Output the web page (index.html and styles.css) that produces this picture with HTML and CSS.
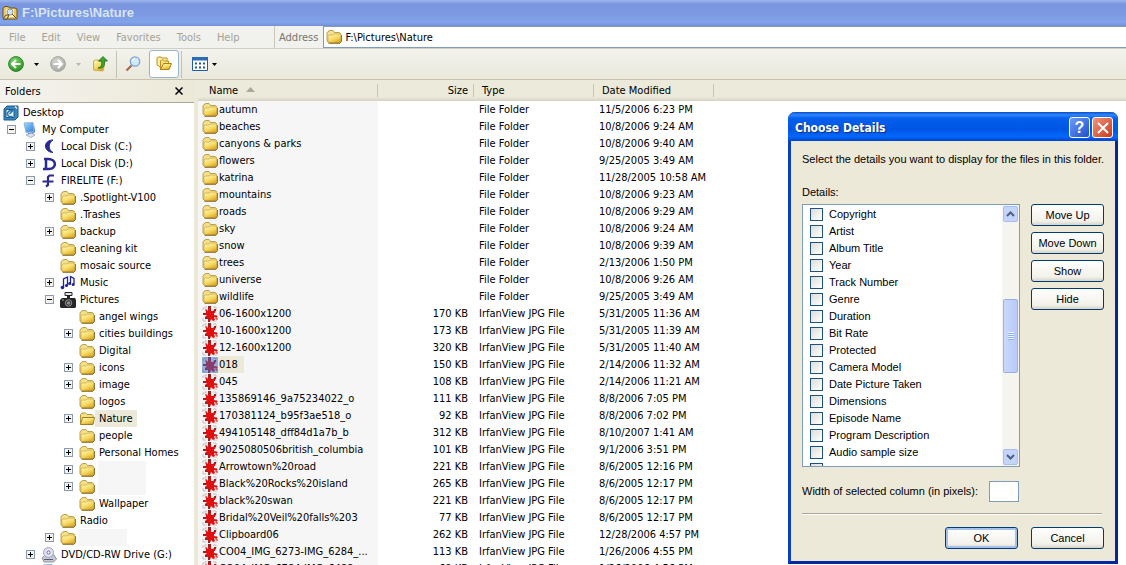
FILE: index.html
```html
<!DOCTYPE html>
<html lang="en">
<head>
<meta charset="UTF-8" />
<meta name="viewport" content="width=device-width, initial-scale=1" />
<title>F:\Pictures\Nature</title>
<link rel="stylesheet" href="styles.css">
</head>
<body>

<svg class="sprite" aria-hidden="true">
  <defs>
    <linearGradient id="gold" x1="0" y1="0" x2="0.6" y2="1">
      <stop offset="0" stop-color="#fffbc4" /><stop offset="0.6" stop-color="#f6d962" /><stop offset="1" stop-color="#dba92c" />
    </linearGradient>
    <radialGradient id="green" cx="0.4" cy="0.3" r="0.8">
      <stop offset="0" stop-color="#7fd66b" /><stop offset="1" stop-color="#1f8a1c" />
    </radialGradient>
    <radialGradient id="grey" cx="0.4" cy="0.3" r="0.8">
      <stop offset="0" stop-color="#d4d4d0" /><stop offset="1" stop-color="#a4a4a0" />
    </radialGradient>
    <linearGradient id="screen" x1="0" y1="0" x2="1" y2="1">
      <stop offset="0" stop-color="#a8dcfb" /><stop offset="1" stop-color="#2a78d8" />
    </linearGradient>
  </defs>
  <symbol id="folder" viewBox="0 0 16 16">
    <path d="M1 12V4l1-1.500L4 1.500h3l1.500 2H13l1.500 1V13l-1 1H3z" fill="#f5e08a" stroke="#b5963f" stroke-width=".9" />
    <path d="M2 12.500V7l1-1h4l1-1h6.500l.5 1v7l-1 1H3z" fill="url(#gold)" stroke="#c9a540" stroke-width=".7" />
    <path d="M2.500 14.200h11.500l1.400-1.600V6" fill="none" stroke="#7d6020" stroke-width=".9" />
  </symbol>
  <symbol id="folder-open" viewBox="0 0 16 16">
    <path d="M1.500 13V3.500L3 2h3.500L8 3.500h5l1 1V8" fill="#f5e08a" stroke="#b5963f" />
    <path d="M1.500 13.500l2-7h12l-1.500 7z" fill="url(#gold)" stroke="#a07c22" />
  </symbol>
  <symbol id="splat" viewBox="0 0 16 16">
    <path d="M0 0h16v16H0z" fill="#fbf0f0" />
    <path d="M1 4V2h3V0M11 1h3v3h1M1 12v3h3M11 15h4" fill="none" stroke="#c4c2c2" />
    <path d="M6 2h3v3h2l2-2 1 1-1 3h-1v2l3 1v1h-3l1 3-2 1-2-2-1 3H6v-3H3v-2l2-2H1V7h3V5L3 4l1-1 2 2z" fill="#e01010" />
    <path d="M6 0h3v3H6zM1 7h3v2H1zM3 11h2v2H3zM6 13h2v3H6zM12 3h2v2h-2z" fill="#962424" />
    <path d="M13 10h2v1h-1v2h2" fill="none" stroke="#e01010" />
  </symbol>
  <symbol id="caret" viewBox="0 0 5 3"><path d="M0 0h5L2.500 3z" fill="currentColor" /></symbol>
  <symbol id="desktop" viewBox="0 0 16 16">
    <path d="M1 4l3-3h11v11l-3 3H1z" fill="#3b87be" stroke="#1b5b8d" />
    <path d="M3 4.500h8v8H3z" fill="#eaf6fd" stroke="#1b5b8d" />
    <path d="M9.500 6.500A3 3 0 1 0 9.500 11M6.500 9l6-6" fill="none" stroke="#2a77ae" stroke-width="1.500" />
    <path d="M12 1.500l2 2" stroke="#d9f0ff" stroke-width="1.500" />
  </symbol>
  <symbol id="computer" viewBox="0 0 16 16">
    <path d="M2 1l9-.5 1 9-8 1z" fill="url(#screen)" stroke="#7aa9dc" stroke-width=".8" />
    <path d="M12 2l1 8-4 3H6v-2l6-1z" fill="#4c78b8" />
    <path d="M4 13l5-2 4 2-4 2.500z" fill="#dbe3ee" stroke="#8b9ab2" stroke-width=".7" />
  </symbol>
  <symbol id="disk-c" viewBox="0 0 16 16">
    <path d="M12 1C2 1 2 13 12 13.500 7 11 7 4 12 1z" fill="#2a2a96" stroke="#2a2a96" />
  </symbol>
  <symbol id="disk-d" viewBox="0 0 16 16">
    <path d="M3 3h4c9 0 9 10 1 10H2M5 3v9" fill="none" stroke="#2a2a96" stroke-width="2.500" />
  </symbol>
  <symbol id="disk-f" viewBox="0 0 16 16">
    <path d="M13 2.500H8.500L7 4v8l-2 1.500M1.500 8.500h11" fill="none" stroke="#2a2a96" stroke-width="2.200" />
  </symbol>
  <symbol id="music" viewBox="0 0 16 16">
    <path d="M3.500 12V4l4-2v8M10.500 8V1.500L14 3.500V9" fill="none" stroke="#20209a" stroke-width="1.300" />
    <g fill="#20209a"><circle cx="2.500" cy="12.500" r="1.800" /><circle cx="6.500" cy="10.500" r="1.600" /><circle cx="9.700" cy="8.500" r="1.500" /><circle cx="13.200" cy="9.500" r="1.500" /></g>
  </symbol>
  <symbol id="camera" viewBox="0 0 16 16">
    <path d="M5 .5h7v3H5z" fill="#e4e4e4" stroke="#222" />
    <path d="M7 4h3v2h5l1 2v7l-1 1H1l-1-1V8l2-2h5z" fill="#262626" />
    <circle cx="8.500" cy="11" r="3.300" fill="#444" stroke="#888" /><circle cx="8.500" cy="11" r="1.500" fill="#999" />
    <path d="M2 8h2" stroke="#aaa" />
  </symbol>
  <symbol id="dvd" viewBox="0 0 16 16">
    <path d="M1 11l3-3h9l2.500 4-3 3H3z" fill="#c6c9d2" stroke="#7e828e" stroke-width=".8" />
    <circle cx="7.500" cy="5.500" r="5" fill="#e2dff4" stroke="#a3a0c4" /><circle cx="7.500" cy="5.500" r="1.500" fill="#fff" stroke="#6d69a5" />
    <path d="M3 12.500h9" stroke="#555b6b" />
  </symbol>
</svg>

<div class="window">
  <header class="titlebar">
    <svg class="icon" viewBox="0 0 16 16">
      <path d="M1 13V3l2-1.500h3L8 3h5l2 1v10H2z" fill="#efc95e" stroke="#6b5320" />
      <path d="M4 4h8v8H4z" fill="#fff4cf" /><circle cx="8" cy="7" r="3" fill="#cfe6f8" stroke="#8b95a0" />
      <path d="M1 14l3-4h3l-2 4zM10 9l4 4" fill="#f8da7c" stroke="#5e4a1b" />
    </svg>
    <h1>F:\Pictures\Nature</h1>
  </header>

  <div class="menubar">
    <nav class="menu" aria-label="Menu">
      <button>File</button>
      <button>Edit</button>
      <button>View</button>
      <button>Favorites</button>
      <button>Tools</button>
      <button>Help</button>
    </nav>
    <div class="address">
      <label for="address">Address</label>
      <div class="address-box">
        <svg class="icon"><use href="#folder" /></svg>
        <input type="text" id="address" value="F:\Pictures\Nature" />
      </div>
    </div>
  </div>

  <div class="toolbar" role="toolbar" aria-label="Standard buttons">
    <button class="tool" aria-label="Back">
      <svg class="icon" viewBox="0 0 16 16"><circle cx="8" cy="8" r="7.400" fill="url(#green)" stroke="#2c8529" /><path d="M12.500 8H5M8 4L4 8l4 4" fill="none" stroke="#fff" stroke-width="2" /></svg>
    </button>
    <button class="drop" aria-label="Back history"><svg class="caret"><use href="#caret" /></svg></button>
    <button class="tool" aria-label="Forward" disabled>
      <svg class="icon" viewBox="0 0 16 16"><circle cx="8" cy="8" r="7.400" fill="url(#grey)" stroke="#a5a5a0" /><path d="M3.500 8H11M8 4l4 4-4 4" fill="none" stroke="#fff" stroke-width="2" /></svg>
    </button>
    <button class="drop" aria-label="Forward history" disabled><svg class="caret"><use href="#caret" /></svg></button>
    <button class="tool" aria-label="Up">
      <svg class="icon" viewBox="0 0 16 16">
        <path d="M1.500 14V5l2-1H6l1 1.500h5.500l-1 8.500-1 1z" fill="url(#gold)" stroke="#d0a83c" />
        <path d="M6 12c4-1 4-4 3.500-7H6.500L11 .5 15.500 5h-3c.5 5-1 8-6.500 7z" fill="#3aa52f" stroke="#1f6d1a" stroke-width=".8" />
      </svg>
    </button>
    <span class="sep"></span>
    <button class="tool" aria-label="Search">
      <svg class="icon" viewBox="0 0 16 16"><path d="M6.500 9.500L1.500 14.500" stroke="#a06a48" stroke-width="2.200" /><circle cx="10" cy="5.500" r="4.700" fill="#cfeafc" stroke="#7fa3d6" stroke-width="1.300" /><path d="M7.500 5A3 3 0 0 1 10 2.500" fill="none" stroke="#fff" stroke-width="1.300" /></svg>
    </button>
    <button class="tool pressed" aria-label="Folders" aria-pressed="true">
      <svg class="icon" viewBox="0 0 16 16">
        <path d="M1 9V2l1-1h3l1 1h5v3L4 11z" fill="#fdf0a8" stroke="#c08f1c" />
        <path d="M4.500 13.500V5l1-1h2l1 1h4v3" fill="#fbe383" stroke="#c08f1c" />
        <path d="M4.500 13.500l3-6h8l-2.500 6z" fill="url(#gold)" stroke="#b07f14" />
      </svg>
    </button>
    <span class="sep"></span>
    <button class="tool views" aria-label="Views">
      <svg class="icon" viewBox="0 0 16 16"><path d="M.5 1.500h15v13H.5z" fill="#fff" stroke="#1f5ea8" /><path d="M0 1h16v3.500H0z" fill="#2a6cb8" /><path d="M3 7.500h10M3 11.500h10" stroke="#26568e" stroke-width="2" stroke-dasharray="2" /></svg>
      <svg class="caret"><use href="#caret" /></svg>
    </button>
  </div>

  <div class="content">
    <aside class="folders">
      <div class="folders-head">
        <h2>Folders</h2>
        <button class="close" aria-label="Close folders"><svg viewBox="0 0 8 8"><path d="M.5.5l7 7M7.500.5l-7 7" stroke="#000" stroke-width="1.500" /></svg></button>
      </div>
      <ul class="tree">
        <li><div class="node"><svg class="icon"><use href="#desktop" /></svg><span>Desktop</span></div>
          <ul>
            <li><div class="node"><button class="toggle open" aria-label="Collapse"></button><svg class="icon"><use href="#computer" /></svg><span>My Computer</span></div>
              <ul>
                <li><div class="node"><button class="toggle" aria-label="Expand"></button><svg class="icon"><use href="#disk-c" /></svg><span>Local Disk (C:)</span></div></li>
                <li><div class="node"><button class="toggle" aria-label="Expand"></button><svg class="icon"><use href="#disk-d" /></svg><span>Local Disk (D:)</span></div></li>
                <li><div class="node"><button class="toggle open" aria-label="Collapse"></button><svg class="icon"><use href="#disk-f" /></svg><span>FIRELITE (F:)</span></div>
                  <ul>
                    <li><div class="node"><button class="toggle" aria-label="Expand"></button><svg class="icon"><use href="#folder" /></svg><span>.Spotlight-V100</span></div></li>
                    <li><div class="node leaf"><svg class="icon"><use href="#folder" /></svg><span>.Trashes</span></div></li>
                    <li><div class="node"><button class="toggle" aria-label="Expand"></button><svg class="icon"><use href="#folder" /></svg><span>backup</span></div></li>
                    <li><div class="node leaf"><svg class="icon"><use href="#folder" /></svg><span>cleaning kit</span></div></li>
                    <li><div class="node leaf"><svg class="icon"><use href="#folder" /></svg><span>mosaic source</span></div></li>
                    <li><div class="node"><button class="toggle" aria-label="Expand"></button><svg class="icon"><use href="#music" /></svg><span>Music</span></div></li>
                    <li><div class="node"><button class="toggle open" aria-label="Collapse"></button><svg class="icon"><use href="#camera" /></svg><span>Pictures</span></div>
                      <ul>
                        <li><div class="node leaf"><svg class="icon"><use href="#folder" /></svg><span>angel wings</span></div></li>
                        <li><div class="node"><button class="toggle" aria-label="Expand"></button><svg class="icon"><use href="#folder" /></svg><span>cities buildings</span></div></li>
                        <li><div class="node leaf"><svg class="icon"><use href="#folder" /></svg><span>Digital</span></div></li>
                        <li><div class="node"><button class="toggle" aria-label="Expand"></button><svg class="icon"><use href="#folder" /></svg><span>icons</span></div></li>
                        <li><div class="node"><button class="toggle" aria-label="Expand"></button><svg class="icon"><use href="#folder" /></svg><span>image</span></div></li>
                        <li><div class="node leaf"><svg class="icon"><use href="#folder" /></svg><span>logos</span></div></li>
                        <li><div class="node"><button class="toggle" aria-label="Expand"></button><svg class="icon"><use href="#folder-open" /></svg><span class="selected">Nature</span></div></li>
                        <li><div class="node leaf"><svg class="icon"><use href="#folder" /></svg><span>people</span></div></li>
                        <li><div class="node"><button class="toggle" aria-label="Expand"></button><svg class="icon"><use href="#folder" /></svg><span>Personal Homes</span></div></li>
                        <li><div class="node"><button class="toggle" aria-label="Expand"></button><svg class="icon"><use href="#folder" /></svg><span class="blank"></span></div></li>
                        <li><div class="node"><button class="toggle" aria-label="Expand"></button><svg class="icon"><use href="#folder" /></svg><span class="blank"></span></div></li>
                        <li><div class="node leaf"><svg class="icon"><use href="#folder" /></svg><span>Wallpaper</span></div></li>
                      </ul>
                    </li>
                    <li><div class="node leaf"><svg class="icon"><use href="#folder" /></svg><span>Radio</span></div></li>
                    <li><div class="node"><button class="toggle" aria-label="Expand"></button><svg class="icon"><use href="#folder" /></svg><span class="blank"></span></div></li>
                  </ul>
                </li>
                <li><div class="node"><button class="toggle" aria-label="Expand"></button><svg class="icon"><use href="#dvd" /></svg><span>DVD/CD-RW Drive (G:)</span></div></li>
                <li><div class="node leaf"><svg class="icon"><use href="#computer" /></svg></div></li>
              </ul>
            </li>
          </ul>
        </li>
      </ul>
    </aside>

    <main class="files">
      <table>
        <colgroup><col class="col-name"><col class="col-size"><col class="col-type"><col class="col-date"><col></colgroup>
        <thead>
          <tr>
            <th>Name <svg class="sort" viewBox="0 0 9 5"><path d="M0 5h9L4.500 0z" fill="#aca899" /></svg></th>
            <th class="size">Size</th><th>Type</th><th>Date Modified</th><th></th>
          </tr>
        </thead>
        <tbody>
          <tr><td><div class="file"><svg class="icon"><use href="#folder" /></svg><span>autumn</span></div></td><td></td><td>File Folder</td><td>11/5/2006 6:23 PM</td><td></td></tr>
          <tr><td><div class="file"><svg class="icon"><use href="#folder" /></svg><span>beaches</span></div></td><td></td><td>File Folder</td><td>10/8/2006 9:24 AM</td><td></td></tr>
          <tr><td><div class="file"><svg class="icon"><use href="#folder" /></svg><span>canyons &amp; parks</span></div></td><td></td><td>File Folder</td><td>10/8/2006 9:40 AM</td><td></td></tr>
          <tr><td><div class="file"><svg class="icon"><use href="#folder" /></svg><span>flowers</span></div></td><td></td><td>File Folder</td><td>9/25/2005 3:49 AM</td><td></td></tr>
          <tr><td><div class="file"><svg class="icon"><use href="#folder" /></svg><span>katrina</span></div></td><td></td><td>File Folder</td><td>11/28/2005 10:58 AM</td><td></td></tr>
          <tr><td><div class="file"><svg class="icon"><use href="#folder" /></svg><span>mountains</span></div></td><td></td><td>File Folder</td><td>10/8/2006 9:23 AM</td><td></td></tr>
          <tr><td><div class="file"><svg class="icon"><use href="#folder" /></svg><span>roads</span></div></td><td></td><td>File Folder</td><td>10/8/2006 9:29 AM</td><td></td></tr>
          <tr><td><div class="file"><svg class="icon"><use href="#folder" /></svg><span>sky</span></div></td><td></td><td>File Folder</td><td>10/8/2006 9:24 AM</td><td></td></tr>
          <tr><td><div class="file"><svg class="icon"><use href="#folder" /></svg><span>snow</span></div></td><td></td><td>File Folder</td><td>10/8/2006 9:39 AM</td><td></td></tr>
          <tr><td><div class="file"><svg class="icon"><use href="#folder" /></svg><span>trees</span></div></td><td></td><td>File Folder</td><td>2/13/2006 1:50 PM</td><td></td></tr>
          <tr><td><div class="file"><svg class="icon"><use href="#folder" /></svg><span>universe</span></div></td><td></td><td>File Folder</td><td>10/8/2006 9:26 AM</td><td></td></tr>
          <tr><td><div class="file"><svg class="icon"><use href="#folder" /></svg><span>wildlife</span></div></td><td></td><td>File Folder</td><td>9/25/2005 3:49 AM</td><td></td></tr>
          <tr><td><div class="file"><svg class="icon"><use href="#splat" /></svg><span>06-1600x1200</span></div></td><td class="size">170 KB</td><td>IrfanView JPG File</td><td>5/31/2005 11:36 AM</td><td></td></tr>
          <tr><td><div class="file"><svg class="icon"><use href="#splat" /></svg><span>10-1600x1200</span></div></td><td class="size">173 KB</td><td>IrfanView JPG File</td><td>5/31/2005 11:39 AM</td><td></td></tr>
          <tr><td><div class="file"><svg class="icon"><use href="#splat" /></svg><span>12-1600x1200</span></div></td><td class="size">320 KB</td><td>IrfanView JPG File</td><td>5/31/2005 11:40 AM</td><td></td></tr>
          <tr><td><div class="file current"><svg class="icon"><use href="#splat" /></svg><span>018</span></div></td><td class="size">150 KB</td><td>IrfanView JPG File</td><td>2/14/2006 11:32 AM</td><td></td></tr>
          <tr><td><div class="file"><svg class="icon"><use href="#splat" /></svg><span>045</span></div></td><td class="size">108 KB</td><td>IrfanView JPG File</td><td>2/14/2006 11:21 AM</td><td></td></tr>
          <tr><td><div class="file"><svg class="icon"><use href="#splat" /></svg><span>135869146_9a75234022_o</span></div></td><td class="size">111 KB</td><td>IrfanView JPG File</td><td>8/8/2006 7:05 PM</td><td></td></tr>
          <tr><td><div class="file"><svg class="icon"><use href="#splat" /></svg><span>170381124_b95f3ae518_o</span></div></td><td class="size">92 KB</td><td>IrfanView JPG File</td><td>8/8/2006 7:02 PM</td><td></td></tr>
          <tr><td><div class="file"><svg class="icon"><use href="#splat" /></svg><span>494105148_dff84d1a7b_b</span></div></td><td class="size">312 KB</td><td>IrfanView JPG File</td><td>8/10/2007 1:41 AM</td><td></td></tr>
          <tr><td><div class="file"><svg class="icon"><use href="#splat" /></svg><span>9025080506british_columbia</span></div></td><td class="size">101 KB</td><td>IrfanView JPG File</td><td>9/1/2006 3:51 PM</td><td></td></tr>
          <tr><td><div class="file"><svg class="icon"><use href="#splat" /></svg><span>Arrowtown%20road</span></div></td><td class="size">221 KB</td><td>IrfanView JPG File</td><td>8/6/2005 12:16 PM</td><td></td></tr>
          <tr><td><div class="file"><svg class="icon"><use href="#splat" /></svg><span>Black%20Rocks%20island</span></div></td><td class="size">265 KB</td><td>IrfanView JPG File</td><td>8/6/2005 12:17 PM</td><td></td></tr>
          <tr><td><div class="file"><svg class="icon"><use href="#splat" /></svg><span>black%20swan</span></div></td><td class="size">221 KB</td><td>IrfanView JPG File</td><td>8/6/2005 12:17 PM</td><td></td></tr>
          <tr><td><div class="file"><svg class="icon"><use href="#splat" /></svg><span>Bridal%20Veil%20falls%203</span></div></td><td class="size">77 KB</td><td>IrfanView JPG File</td><td>8/6/2005 12:17 PM</td><td></td></tr>
          <tr><td><div class="file"><svg class="icon"><use href="#splat" /></svg><span>Clipboard06</span></div></td><td class="size">262 KB</td><td>IrfanView JPG File</td><td>12/28/2006 4:57 PM</td><td></td></tr>
          <tr><td><div class="file"><svg class="icon"><use href="#splat" /></svg><span>CO04_IMG_6273-IMG_6284_...</span></div></td><td class="size">113 KB</td><td>IrfanView JPG File</td><td>1/26/2006 4:55 PM</td><td></td></tr>
          <tr><td><div class="file"><svg class="icon"><use href="#splat" /></svg><span>CO04_IMG_6784-IMG_6488_...</span></div></td><td class="size">69 KB</td><td>IrfanView JPG File</td><td>1/26/2006 4:56 PM</td><td></td></tr>
        </tbody>
      </table>
    </main>
  </div>
</div>

<form class="dialog" role="dialog" aria-labelledby="dialog-title">
  <div class="dialog-title">
    <h2 id="dialog-title">Choose Details</h2>
    <button type="button" class="caption-btn help">?</button>
    <button type="button" class="caption-btn exit" aria-label="Close"><svg viewBox="0 0 12 12"><path d="M1 1l10 10M11 1L1 11" stroke="#fff" stroke-width="2" /></svg></button>
  </div>
  <div class="dialog-body">
    <p>Select the details you want to display for the files in this folder.</p>
    <p class="list-label" id="details-label">Details:</p>
    <div class="picker">
      <div class="listbox" role="group" aria-labelledby="details-label">
        <div class="options">
          <label><input type="checkbox" /> Copyright</label>
          <label><input type="checkbox" /> Artist</label>
          <label><input type="checkbox" /> Album Title</label>
          <label><input type="checkbox" /> Year</label>
          <label><input type="checkbox" /> Track Number</label>
          <label><input type="checkbox" /> Genre</label>
          <label><input type="checkbox" /> Duration</label>
          <label><input type="checkbox" /> Bit Rate</label>
          <label><input type="checkbox" /> Protected</label>
          <label><input type="checkbox" /> Camera Model</label>
          <label><input type="checkbox" /> Date Picture Taken</label>
          <label><input type="checkbox" /> Dimensions</label>
          <label><input type="checkbox" /> Episode Name</label>
          <label><input type="checkbox" /> Program Description</label>
          <label><input type="checkbox" /> Audio sample size</label>
          <label><input type="checkbox" aria-label="More" /></label>
        </div>
        <div class="scrollbar">
          <button type="button" aria-label="Scroll up"><svg viewBox="0 0 9 6"><path d="M1 5l3.500-3.500L8 5" fill="none" stroke="#4d6185" stroke-width="2" /></svg></button>
          <div class="track"><div class="thumb"></div></div>
          <button type="button" aria-label="Scroll down"><svg viewBox="0 0 9 6"><path d="M1 1l3.500 3.500L8 1" fill="none" stroke="#4d6185" stroke-width="2" /></svg></button>
        </div>
      </div>
      <div class="side">
        <button type="button" class="btn">Move Up</button>
        <button type="button" class="btn">Move Down</button>
        <button type="button" class="btn">Show</button>
        <button type="button" class="btn">Hide</button>
      </div>
    </div>
    <div class="width-row">
      <label for="col-width">Width of selected column (in pixels):</label>
      <input type="text" id="col-width" />
    </div>
    <hr />
    <div class="actions">
      <button type="submit" class="btn default">OK</button>
      <button type="button" class="btn">Cancel</button>
    </div>
  </div>
</form>

</body>
</html>
```
FILE: styles.css
```css
* {
  box-sizing: border-box;
}
body {
  margin: 0;
  height: 100vh;
  overflow: hidden;
  position: relative;
  background: #fff;
  color: #000;
  font: 11px/17px "DejaVu Sans Condensed", Tahoma, sans-serif;
}
button, input {
  font: inherit;
  color: inherit;
  margin: 0;
  padding: 0;
  border: 0;
  background: none;
}
h1, h2, p, ul {
  margin: 0;
  padding: 0;
}
/* not display: none, the gradients must stay usable */
.sprite {
  position: absolute;
  width: 0;
  height: 0;
}
.icon {
  width: 16px;
  height: 16px;
  flex: none;
}
.window {
  height: 100%;
  display: flex;
  flex-direction: column;
}

/* title, menu and toolbar */
.titlebar {
  flex: none;
  height: 26px;
  display: flex;
  align-items: center;
  gap: 4px;
  padding-left: 2px;
  background: linear-gradient(#9db8ee, #7a96df 15%, #7b98e1 50%, #82a4ea 85%, #7390d8);
}
.titlebar h1 {
  font: bold 13px/18px "Liberation Sans", Arial, sans-serif;
  color: #d8e4f8;
}
.menubar {
  flex: none;
  height: 23px;
  display: flex;
  background: #f1f1ee;
  border-bottom: 1px solid #d0cfc4;
}
.menu {
  width: 275px;
  display: flex;
  align-items: center;
  gap: 16px;
  padding-left: 9px;
  border-right: 1px solid #c9c7b8;
  color: #a5a294;
}
.address {
  flex: 1;
  display: flex;
  align-items: center;
  gap: 5px;
  padding-left: 4px;
  color: #77756c;
}
.address-box {
  flex: 1;
  height: 22px;
  display: flex;
  align-items: center;
  gap: 3px;
  padding-left: 2px;
  background: #fff;
  border: 1px solid #7f9db9;
  border-right: 0;
}
.address-box input {
  flex: 1;
  color: #000;
}
.toolbar {
  flex: none;
  height: 31px;
  display: flex;
  align-items: center;
  padding-left: 8px;
  background: linear-gradient(#f3f3ee, #e9e8db);
  border-bottom: 1px solid #c5c2b2;
}
.tool {
  display: flex;
  align-items: center;
}
.drop {
  width: 26px;
  display: flex;
  justify-content: center;
  padding-right: 2px;
}
.drop:disabled {
  color: #b9b7aa;
}
.drop:disabled + .tool {
  margin-right: 8px;
}
.caret {
  width: 5px;
  height: 3px;
}
.sep {
  width: 1px;
  height: 27px;
  background: #c5c2b2;
}
.sep + .tool {
  padding: 0 8px;
}
.pressed {
  height: 28px;
  padding: 0 6px;
  margin-right: 2px;
  background: #fff;
  border: 1px solid #98b5cf;
  border-radius: 3px;
}
.sep + .views {
  padding: 0 10px;
  gap: 4px;
}

/* folder tree */
.content {
  flex: 1;
  min-height: 0;
  display: flex;
}
.folders {
  flex: none;
  width: 198px;
  overflow: hidden;
  border-right: 4px solid #ece9d8;
}
.folders-head {
  height: 23px;
  display: flex;
  align-items: center;
  justify-content: space-between;
  padding: 0 10px 0 5px;
  background: linear-gradient(90deg, #f4f3ee, #ece9d8);
  border-bottom: 1px solid #aca899;
}
.folders-head h2 {
  font-size: 11px;
  font-weight: normal;
}
.close {
  width: 9px;
  height: 17px;
}
.close svg {
  display: block;
  width: 8px;
  height: 8px;
}
.tree {
  padding-top: 1px;
}
.tree, .tree ul {
  list-style: none;
}
.tree > li > .node {
  padding-left: 3px;
}
.tree > li > ul {
  padding-left: 7px;
}
.tree > li > ul ul {
  padding-left: 19px;
}
.node {
  height: 17px;
  display: flex;
  align-items: center;
  white-space: nowrap;
}
.node span {
  padding: 0 4px;
}
.leaf {
  padding-left: 15px;
}
.toggle {
  flex: none;
  width: 9px;
  height: 9px;
  margin-right: 6px;
  border: 1px solid #8a9bb0;
  background:
    linear-gradient(#000, #000) center / 5px 1px no-repeat,
    linear-gradient(#000, #000) center / 1px 5px no-repeat,
    #f4f3ee;
}
.toggle.open {
  background: linear-gradient(#000, #000) center / 5px 1px no-repeat, #f4f3ee;
}
.selected {
  background: #ece9d8;
}
.node .blank {
  width: 48px;
  height: 17px;
  margin-left: 3px;
  background: #f6f6f6;
}

/* file list */
.files {
  flex: 1;
  overflow: hidden;
}
table {
  width: 100%;
  table-layout: fixed;
  border-collapse: collapse;
}
.col-name {
  width: 180px;
}
.col-size {
  width: 96px;
}
.col-type, .col-date {
  width: 120px;
}
th {
  height: 21px;
  padding: 0 6px 0 8px;
  font-weight: normal;
  text-align: left;
  background:
    linear-gradient(#c7c5b2, #c7c5b2) right center / 1px 13px no-repeat,
    linear-gradient(#ebeadb 80%, #d6d2c2);
}
th:first-child {
  padding-left: 11px;
}
th:last-child {
  background: linear-gradient(#ebeadb 80%, #d6d2c2);
}
.sort {
  width: 9px;
  height: 5px;
  margin-left: 5px;
  vertical-align: 2px;
}
td {
  height: 17px;
  padding: 0 6px 0 5px;
  white-space: nowrap;
}
td:first-child {
  padding: 0 0 0 4px;
  background: #f6f6f6;
}
.size {
  text-align: right;
}
.file {
  height: 17px;
  display: flex;
  align-items: center;
}
.file span {
  padding-left: 1px;
}
.current .icon {
  background: #316ac5;
}
.current use {
  opacity: 0.5;
}
.current span {
  padding-right: 6px;
  background: #ece9d8;
}

/* dialog */
.dialog {
  position: absolute;
  top: 112px;
  right: 8px;
  width: 330px;
  background: #ece9d8;
  border: 3px solid #0a3fc0;
  border-top: 0;
  border-right-color: #0426a0;
  border-bottom-color: #0426a0;
  border-radius: 7px 7px 0 0;
  font: 11px/17px "Liberation Sans", Arial, sans-serif;
}
.dialog-title {
  height: 29px;
  margin: 0 -3px;
  display: flex;
  align-items: center;
  gap: 2px;
  padding: 2px 5px 0 7px;
  background: linear-gradient(#0a4fc4, #2f86ff 10%, #0560ec 22%, #0055e5 60%, #0468fb 85%, #0044c8);
  border-radius: 7px 7px 0 0;
}
.dialog-title h2 {
  flex: 1;
  font: bold 12px/18px "DejaVu Sans Condensed", Tahoma, sans-serif;
  color: #fff;
  text-shadow: 1px 1px 1px #0a2f85;
}
.caption-btn {
  width: 21px;
  height: 21px;
  display: flex;
  align-items: center;
  justify-content: center;
  border: 1px solid #fff;
  border-radius: 3px;
  color: #fff;
}
.caption-btn svg {
  width: 12px;
  height: 12px;
}
.help {
  font-size: 16px;
  font-weight: bold;
  background: linear-gradient(135deg, #6f9af5, #1f50d0);
}
.exit {
  background: linear-gradient(135deg, #f0967c, #c8391a);
}
.dialog-body {
  padding: 10px 11px 12px;
}
.dialog-body p {
  white-space: nowrap;
}
.dialog-body .list-label {
  margin-top: 16px;
}
.picker {
  display: flex;
  gap: 11px;
  margin-top: 3px;
}
.listbox {
  flex: 1;
  height: 263px;
  display: flex;
  background: #fff;
  border: 1px solid #7f9db9;
}
.options {
  flex: 1;
  overflow: hidden;
  padding: 1px 0 0 7px;
}
.options label {
  height: 17px;
  display: flex;
  align-items: center;
  gap: 6px;
}
.options input {
  appearance: none;
  width: 13px;
  height: 13px;
  border: 1px solid #1c5180;
  background: linear-gradient(135deg, #dcdcd7, #fff);
}
.scrollbar {
  width: 17px;
  display: flex;
  flex-direction: column;
  padding: 1px;
  background: #f5f4ee;
}
.scrollbar button {
  height: 16px;
  display: flex;
  align-items: center;
  justify-content: center;
  background: #c5d4fb;
  border: 1px solid #a9bdf0;
  border-radius: 2px;
}
.scrollbar svg {
  width: 9px;
  height: 6px;
}
.track {
  flex: 1;
  padding-top: 77px;
}
.thumb {
  height: 74px;
  background:
    repeating-linear-gradient(#eef4fe 0 1px, #8cb0f8 1px 2px) center / 6px 8px no-repeat,
    linear-gradient(90deg, #cad8fd, #b9c9f8);
  border: 1px solid #98b0e8;
  border-radius: 2px;
}
.side {
  display: flex;
  flex-direction: column;
  gap: 6px;
}
.btn {
  width: 73px;
  height: 22px;
  background: linear-gradient(#fff, #f2f1ea 80%, #d8d2c6);
  border: 1px solid #003c74;
  border-radius: 3px;
}
.default {
  box-shadow: inset 0 0 0 2px #a4c0ee;
}
.width-row {
  display: flex;
  align-items: center;
  gap: 11px;
  margin-top: 14px;
}
.width-row input {
  width: 30px;
  height: 21px;
  background: #fff;
  border: 1px solid #7f9db9;
}
hr {
  margin: 11px 2px 12px 0;
  border: 0;
  border-top: 1px solid #aca899;
  border-bottom: 1px solid #fff;
}
.actions {
  display: flex;
  justify-content: flex-end;
  gap: 13px;
}
```
